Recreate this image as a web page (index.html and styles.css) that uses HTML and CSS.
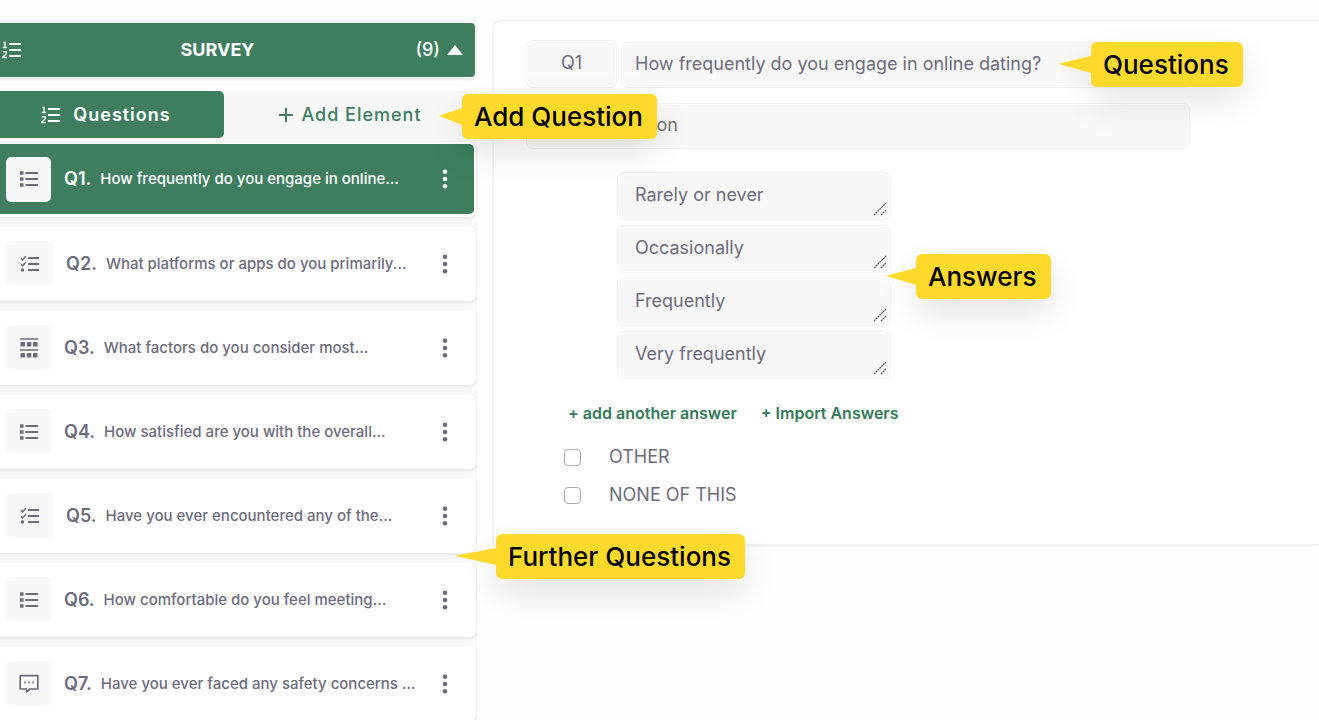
FILE: index.html
```html
<!DOCTYPE html>
<html lang="en">
<head>
<meta charset="utf-8">
<title>Survey editor</title>
<link rel="stylesheet" href="styles.css">
</head>
<body>
<svg class="sprite" aria-hidden="true">
  <symbol id="i-ol" viewBox="0 0 20 18">
    <path d="M7 3h12M7 9h12M7 15h12" fill="none" stroke="currentColor" stroke-width="2"/>
    <path d="M1 1.500h2v5M.8 6.500h4M.8 10.800h3.300v2.200L1 15.800v.7h4" fill="none" stroke="currentColor" stroke-width="1.500" opacity=".9"/>
  </symbol>
  <symbol id="i-ul" viewBox="0 0 20 18">
    <path d="M6.500 3h12.500M6.500 9h12.500M6.500 15h12.500" fill="none" stroke="currentColor" stroke-width="2"/>
    <path d="M1 1.200h3.500v3.600H1zM1 7.200h3.500v3.600H1zM1 13.200h3.500v3.600H1z" fill="currentColor"/>
  </symbol>
  <symbol id="i-check" viewBox="0 0 20 18">
    <path d="M8 3h11M8 9h11M8 15h11" fill="none" stroke="currentColor" stroke-width="2"/>
    <path d="M1 3.200l1.600 1.600L6 1.200M1 9.200l1.600 1.600L6 7.200" fill="none" stroke="currentColor" stroke-width="1.500"/>
    <circle cx="2.500" cy="15" r="1.700" fill="currentColor"/>
  </symbol>
  <symbol id="i-grid" viewBox="0 0 20 20">
    <path d="M1 1h18M1 12h18" fill="none" stroke="currentColor" stroke-width="1.600"/>
    <path d="M1.500 4h4.500v4.500h-4.500zM7.800 4h4.500v4.500h-4.500zM14 4h4.500v4.500h-4.500zM1.500 15h4.500v4.500h-4.500zM7.800 15h4.500v4.500h-4.500zM14 15h4.500v4.500h-4.500z" fill="currentColor"/>
  </symbol>
  <symbol id="i-chat" viewBox="0 0 20 19">
    <path d="M1.200 1.200h17.600v13.300h-8L7.500 17.500v-3H1.200z" fill="none" stroke="currentColor" stroke-width="1.700" stroke-linejoin="round"/>
    <path d="M5 7h2v2H5zM9 7h2v2H9zM13 7h2v2h-2z" fill="currentColor" opacity=".7"/>
  </symbol>
  <symbol id="i-dots" viewBox="0 0 6 20">
    <circle cx="3" cy="2.700" r="2.300" fill="currentColor"/><circle cx="3" cy="10" r="2.300" fill="currentColor"/><circle cx="3" cy="17.300" r="2.300" fill="currentColor"/>
  </symbol>
  <symbol id="i-grip" viewBox="0 0 14 14">
    <path d="M1 13L13 1M8 13l5-5" fill="none" stroke="currentColor" stroke-width="1.200" stroke-dasharray="2 .6"/>
  </symbol>
</svg>
<div class="app">
  <aside class="sidebar">
    <button class="survey" type="button">
      <svg class="icon"><use href="#i-ol"/></svg>
      <span class="survey-title">SURVEY</span>
      <span class="survey-count">(9)<svg class="caret" viewBox="0 0 16 10"><path d="M8 0l8 10H0z" fill="currentColor"/></svg></span>
    </button>
    <div class="panel">
      <div class="tabs">
        <button class="tab active" type="button"><svg class="icon"><use href="#i-ol"/></svg>Questions</button>
        <button class="tab" type="button"><svg class="plus" viewBox="0 0 14 14"><path d="M7 0v14M0 7h14" stroke="currentColor" stroke-width="2"/></svg>Add Element</button>
      </div>
      <ul class="list">
        <li class="item selected"><span class="kind"><svg class="icon"><use href="#i-ul"/></svg></span><b class="num">Q1.</b><span class="name">How frequently do you engage in online...</span><button class="more" type="button" aria-label="Q1 options"><svg class="dots"><use href="#i-dots"/></svg></button></li>
        <li class="item"><span class="kind wide"><svg class="icon"><use href="#i-check"/></svg></span><b class="num">Q2.</b><span class="name">What platforms or apps do you primarily...</span><button class="more" type="button" aria-label="Q2 options"><svg class="dots"><use href="#i-dots"/></svg></button></li>
        <li class="item"><span class="kind"><svg class="icon tall"><use href="#i-grid"/></svg></span><b class="num">Q3.</b><span class="name">What factors do you consider most...</span><button class="more" type="button" aria-label="Q3 options"><svg class="dots"><use href="#i-dots"/></svg></button></li>
        <li class="item"><span class="kind"><svg class="icon"><use href="#i-ul"/></svg></span><b class="num">Q4.</b><span class="name">How satisfied are you with the overall...</span><button class="more" type="button" aria-label="Q4 options"><svg class="dots"><use href="#i-dots"/></svg></button></li>
        <li class="item"><span class="kind wide"><svg class="icon"><use href="#i-check"/></svg></span><b class="num">Q5.</b><span class="name">Have you ever encountered any of the...</span><button class="more" type="button" aria-label="Q5 options"><svg class="dots"><use href="#i-dots"/></svg></button></li>
        <li class="item"><span class="kind"><svg class="icon"><use href="#i-ul"/></svg></span><b class="num">Q6.</b><span class="name">How comfortable do you feel meeting...</span><button class="more" type="button" aria-label="Q6 options"><svg class="dots"><use href="#i-dots"/></svg></button></li>
        <li class="item"><span class="kind"><svg class="icon tall"><use href="#i-chat"/></svg></span><b class="num">Q7.</b><span class="name">Have you ever faced any safety concerns ...</span><button class="more" type="button" aria-label="Q7 options"><svg class="dots"><use href="#i-dots"/></svg></button></li>
      </ul>
    </div>
  </aside>
  <main class="editor">
    <div class="fields">
      <div class="question-row">
        <input class="field code" type="text" value="Q1" aria-label="Question code">
        <input class="field question" type="text" value="How frequently do you engage in online dating?" aria-label="Question">
      </div>
      <input class="field description" type="text" placeholder="Add Description" aria-label="Description">
    </div>
    <div class="answers">
      <div class="answer"><textarea class="field" rows="1" aria-label="Answer 1">Rarely or never</textarea><svg class="grip"><use href="#i-grip"/></svg></div>
      <div class="answer"><textarea class="field" rows="1" aria-label="Answer 2">Occasionally</textarea><svg class="grip"><use href="#i-grip"/></svg></div>
      <div class="answer"><textarea class="field" rows="1" aria-label="Answer 3">Frequently</textarea><svg class="grip"><use href="#i-grip"/></svg></div>
      <div class="answer"><textarea class="field" rows="1" aria-label="Answer 4">Very frequently</textarea><svg class="grip"><use href="#i-grip"/></svg></div>
    </div>
    <div class="links"><a href="#add">+ add another answer</a><a href="#import">+ Import Answers</a></div>
    <div class="options">
      <label class="option"><input type="checkbox">OTHER</label>
      <label class="option"><input type="checkbox">NONE OF THIS</label>
    </div>
  </main>
  <div class="callout c-add">Add Question</div>
  <div class="callout c-questions">Questions</div>
  <div class="callout c-answers">Answers</div>
  <div class="callout c-further">Further Questions</div>
</div>
</body>
</html>
```
FILE: styles.css
```css
* { box-sizing: border-box; }
body {
  margin: 0;
  background: #fefefe;
  color: #6c6b7b;
  font: 18px/24px Inter, "Liberation Sans", sans-serif;
}
button, input, textarea { font: inherit; color: inherit; margin: 0; }
button { border: 0; background: none; padding: 0; cursor: pointer; }
.sprite { display: none; }
.icon { width: 20px; height: 18px; flex: none; }
.icon.tall { height: 20px; }

.app {
  position: relative;
  display: grid;
  grid-template-columns: 477px minmax(0, 1fr);
  column-gap: 16px;
  align-items: start;
  height: 100vh;
  overflow: hidden;
}

/* Sidebar */
.sidebar { padding-top: 23px; }
.survey {
  display: grid;
  grid-template-columns: 54px 1fr 84px;
  align-items: center;
  width: calc(100% - 2px);
  height: 54px;
  padding: 0 12px 0 2px;
  background: #3e7e5f;
  color: #fff;
  border-radius: 0 4px 4px 0;
  box-shadow: 0 0 0 1px #fff, 0 1px 3px 1px #00000026;
  text-align: left;
}
.survey-title { font-weight: 700; text-align: center; }
.survey-count {
  display: flex;
  align-items: center;
  justify-content: flex-end;
  gap: 7px;
  font-weight: 500;
}
.caret { width: 16px; height: 10px; }
.panel { margin-top: 14px; background: #f8f8f8; }
.tabs { display: flex; height: 47px; }
.tab {
  display: flex;
  align-items: center;
  justify-content: center;
  flex: 1;
  gap: 8px;
  color: #3e7e5f;
  font-weight: 500;
  letter-spacing: 1px;
}
.tab.active {
  flex: 0 0 224px;
  gap: 12px;
  padding-right: 12px;
  background: #3e7e5f;
  color: #fff;
  font-weight: 600;
  border-radius: 0 5px 5px 0;
}
.plus { width: 14px; height: 14px; }
.list {
  display: grid;
  gap: 9px;
  margin: 0;
  padding: 4px 1px 0 0;
  list-style: none;
}
.item {
  display: flex;
  align-items: center;
  height: 75px;
  padding: 0 26px 0 6px;
  background: #fff;
  border-radius: 0 7px 7px 0;
  box-shadow: 0 1px 2px 1px #0000000f;
}
.item.selected {
  background: #3e7e5f;
  color: #fff;
  border: solid #fff;
  border-width: 2px 2px 3px 0;
  padding-right: 24px;
}
.kind {
  display: grid;
  place-items: center;
  width: 45px;
  height: 45px;
  margin-right: 13px;
  background: #f8f8f8;
  border-radius: 5px;
  color: #6c6b7b;
}
.kind.wide { width: 47px; }
.num { font-weight: 600; margin-right: 9px; }
.name { flex: 1; font-size: 15px; font-weight: 500; white-space: nowrap; }
.more { display: grid; place-items: center; width: 10px; height: 28px; }
.dots { width: 6px; height: 20px; }

/* Question editor */
.editor {
  margin-top: 20px;
  padding: 19px 24px 37px 32px;
  background: #fff;
  border: 1px solid #f1f1f1;
  border-right: 0;
  border-radius: 8px 0 0 0;
  box-shadow: 0 1px 3px #00000014;
}
.fields { max-width: 664px; }
.field {
  display: block;
  width: 100%;
  height: 48px;
  background: #f8f8f8;
  border: 1px solid #f2f2f2;
  border-radius: 7px;
  box-shadow: inset 0 0 0 1px #fff;
  outline: 0;
}
.question-row {
  display: flex;
  align-items: flex-end;
  gap: 4px;
  margin-bottom: 15px;
}
.code { flex: 0 0 91px; padding: 0 0 4px; text-align: center; }
.question { flex: 1; height: 46px; min-width: 0; padding: 0 13px 4px; }
.description { height: 46px; padding: 0 14px 4px; }
.description::placeholder { color: #757575; opacity: 1; }
.answers {
  display: grid;
  gap: 5px;
  width: 274px;
  margin: 23px 0 0 91px;
}
.answer { position: relative; }
.answer .field { padding: 10px 17px; resize: none; overflow: hidden; }
.grip {
  position: absolute;
  right: 4px;
  bottom: 4px;
  width: 14px;
  height: 14px;
  color: #555;
  pointer-events: none;
}
.links { display: flex; gap: 24px; margin: 22px 0 0 42px; }
.links a { color: #337a57; font-size: 16px; font-weight: 600; text-decoration: none; }
.options { display: grid; gap: 14px; margin: 20px 0 0 38px; }
.option { display: flex; align-items: center; gap: 28px; }
.option input {
  appearance: none;
  width: 17px;
  height: 17px;
  background: #fff;
  border: 1px solid #a9a9a9;
  border-radius: 4px;
}

/* Annotations over the page */
.callout {
  position: absolute;
  padding: 0 14px 0 12px;
  background: #ffda2c;
  border-radius: 6px;
  box-shadow: 0 14px 36px #0000001c;
  color: #000;
  font-size: 26px;
  font-weight: 500;
  line-height: 45px;
  white-space: nowrap;
}
.callout::before {
  content: "";
  position: absolute;
  right: 100%;
  top: 14px;
  width: 33px;
  height: 17px;
  background: #ffda2c;
  clip-path: polygon(0 45%, 100% 0, 100% 100%);
}
.c-add { left: 462px; top: 94px; }
.c-add::before { width: 23px; }
.c-questions { left: 1091px; top: 42px; }
.c-answers { left: 916px; top: 254px; }
.c-answers::before { width: 30px; }
.c-further { left: 496px; top: 534px; }
.c-further::before { width: 41px; }
```
